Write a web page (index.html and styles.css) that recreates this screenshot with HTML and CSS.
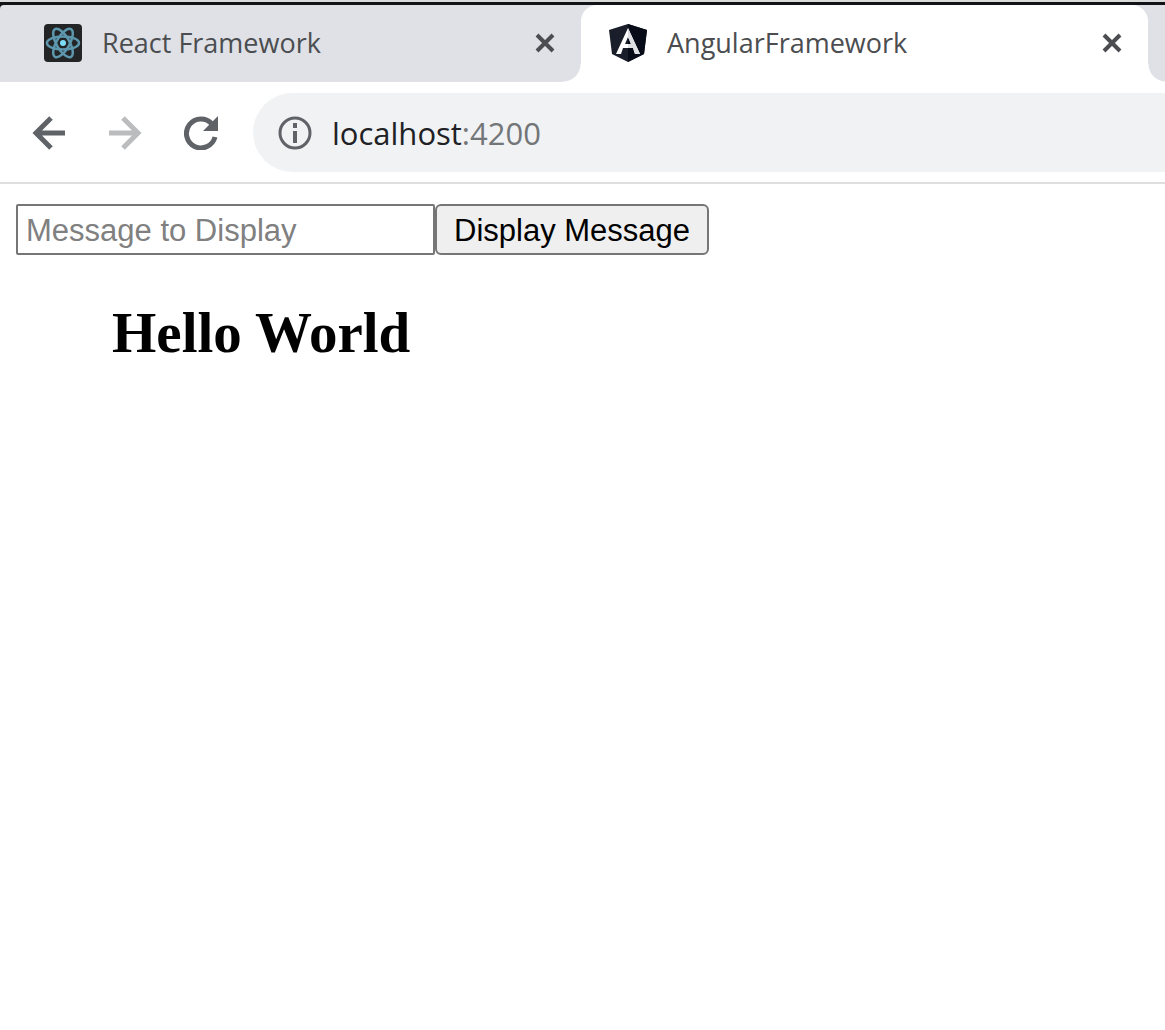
FILE: index.html
```html
<!DOCTYPE html>
<html lang="en">
<head>
<meta charset="utf-8">
<title>AngularFramework</title>
<link rel="stylesheet" href="styles.css">
</head>
<body>
<header class="browser">
  <div class="tabs">
    <div class="tab">
      <svg class="favicon" viewBox="0 0 38 38" aria-hidden="true">
        <rect width="38" height="38" rx="4" fill="#232425"/>
        <g fill="none" stroke="#5d97ae" stroke-width="2.500">
          <ellipse cx="19" cy="19" rx="16" ry="6.500"/>
          <ellipse cx="19" cy="19" rx="16" ry="6.500" transform="rotate(60 19 19)"/>
          <ellipse cx="19" cy="19" rx="16" ry="6.500" transform="rotate(120 19 19)"/>
        </g>
        <circle cx="19" cy="19" r="3" fill="#7dddf8"/>
      </svg>
      <span class="tab-title">React Framework</span>
      <button class="close" type="button" aria-label="Close React Framework">
        <svg viewBox="0 0 20 20"><path d="M2 2L18 18M18 2L2 18"/></svg>
      </button>
    </div>
    <div class="tab active">
      <svg class="favicon" viewBox="0 0 38 38" aria-hidden="true">
        <path d="M19 0L38 6L35 30L19 38L3 30L0 6Z" fill="#1a1e2a"/>
        <path d="M19 0L38 6L35 30L19 38Z" fill="#080b18"/>
        <path fill="#fff" fill-rule="evenodd" d="M19 4L31 30H26L24 24H14L12 30H7ZM19 13L16 20H22Z"/>
        <path d="M19 4L31 30H26L24 24H19V20H22L19 13Z" fill="#dedfe2"/>
      </svg>
      <span class="tab-title">AngularFramework</span>
      <button class="close" type="button" aria-label="Close AngularFramework">
        <svg viewBox="0 0 20 20"><path d="M2 2L18 18M18 2L2 18"/></svg>
      </button>
    </div>
  </div>
  <nav class="toolbar">
    <button class="tool" type="button" aria-label="Back">
      <svg viewBox="0 0 34 34"><path d="M33 17H4M19 2L4 17L19 32"/></svg>
    </button>
    <button class="tool forward" type="button" aria-label="Forward">
      <svg viewBox="0 0 34 34"><path d="M1 17H30M15 2L30 17L15 32"/></svg>
    </button>
    <button class="tool" type="button" aria-label="Reload">
      <svg viewBox="0 0 34 34"><path d="M28 8A14.500 14.500 0 1 0 31 21"/><path class="solid" d="M34 0V15H19Z"/></svg>
    </button>
    <a class="address" href="#">
      <svg class="info" viewBox="0 0 34 34" aria-hidden="true"><circle cx="17" cy="17" r="15"/><path d="M17 15V27M17 7V12"/></svg>
      <span>localhost<span class="port">:4200</span></span>
    </a>
  </nav>
</header>
<main class="page">
  <form class="message-form">
    <input class="message" type="text" placeholder="Message to Display" aria-label="Message to Display">
    <button class="display" type="button">Display Message</button>
  </form>
  <h2 class="greeting">Hello World</h2>
</main>
</body>
</html>
```
FILE: styles.css
```css
* { box-sizing: border-box; }
body {
  margin: 0;
  background: #fff;
  color: #000;
  font-family: "Liberation Serif", serif;
}
button { margin: 0; padding: 0; border: 0; background: none; }
svg { display: block; }

.browser {
  overflow: hidden;
  padding-top: 3px;
  border-top: 2px solid #dadada;
  border-bottom: 2px solid #dfdfdf;
  background: #121316;
  font-family: "Open Sans", sans-serif;
}
.tabs {
  display: grid;
  grid-template-columns: 581fr 567fr 17fr;
  height: 77px;
  border-top-left-radius: 4px;
  background: #dfe1e6;
}
.tab {
  display: flex;
  align-items: center;
  gap: 20px;
  padding: 0 26px 2px 44px;
}
.active {
  position: relative;
  padding-left: 28px;
  border-radius: 16px 16px 0 0;
  background: #fff;
}
.active::before,
.active::after {
  content: "";
  position: absolute;
  bottom: 0;
  width: 18px;
  height: 18px;
}
.active::before {
  right: 100%;
  background: radial-gradient(circle at 0 0, transparent 17px, #fff 18px);
}
.active::after {
  left: 100%;
  background: radial-gradient(circle at 100% 0, transparent 17px, #fff 18px);
}
.favicon { flex: none; width: 38px; height: 38px; }
.tab-title {
  flex: 1;
  color: #4b4d50;
  font-size: 27px;
  line-height: 36px;
  white-space: nowrap;
}
.close svg {
  width: 20px;
  height: 20px;
  fill: none;
  stroke: #4b4d50;
  stroke-width: 4;
}

.toolbar {
  display: flex;
  align-items: center;
  gap: 42px;
  padding: 11px 0 10px 32px;
  background: #fff;
}
.tool svg {
  width: 34px;
  height: 34px;
  fill: none;
  stroke: #5f6368;
  stroke-width: 5;
}
.forward svg { stroke: #babcbe; }
.tool .solid { fill: #5f6368; stroke: none; }
.address {
  flex: 1;
  display: flex;
  align-items: center;
  gap: 20px;
  height: 79px;
  margin-left: -7px;
  padding-left: 25px;
  border-radius: 40px 0 0 40px;
  background: #f1f2f4;
  color: #202124;
  font-size: 31px;
  line-height: 40px;
  text-decoration: none;
}
.port { color: #737679; }
.info {
  width: 34px;
  height: 34px;
  fill: none;
  stroke: #5f6368;
  stroke-width: 3;
}
.info path { stroke-width: 4; }

.page { padding: 20px 16px; }
.message-form { display: flex; }
.message,
.display {
  height: 51px;
  border: 2px solid #767676;
  font-family: "Liberation Sans", sans-serif;
  font-size: 31px;
}
.message {
  width: 419px;
  padding: 4px 8px 2px;
  border-radius: 2px;
  background: #fff;
}
.message::placeholder { color: #808080; opacity: 1; }
.display {
  padding: 2px 17px 0;
  border-radius: 6px;
  background: #efefef;
  color: #000;
}
.greeting {
  margin: 46px 96px;
  font-size: 57px;
  line-height: 64px;
}
```
